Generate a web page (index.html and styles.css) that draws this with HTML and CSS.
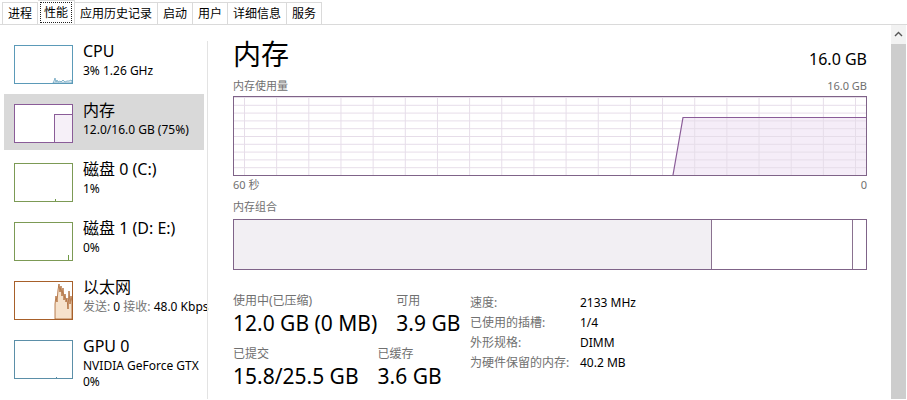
FILE: index.html
```html
<!DOCTYPE html>
<html lang="zh-CN">
<head>
  <meta charset="UTF-8">
  <title>任务管理器 - 性能</title>
  <link rel="stylesheet" href="styles.css">
</head>
<body>

  <div class="tabs">
    <div class="tab first">进程</div>
    <div class="tab active"><span class="focus">性能</span></div>
    <div class="tab">应用历史记录</div>
    <div class="tab">启动</div>
    <div class="tab">用户</div>
    <div class="tab">详细信息</div>
    <div class="tab">服务</div>
  </div>

  <div class="window">
    <!-- resource list -->
    <div class="sidebar">
      <div class="item">
        <svg class="thumb cpu" viewBox="0 0 57 37">
          <polygon points="38,37 39,35 40,32 41,36 42,34 43,36 45,35 46,36 48,34 50,36 52,35 54,35 56,34 57,35 57,37" fill="#e3eff4" stroke="#5b9ab8" stroke-width="0.7"/>
        </svg>
        <div class="info">
          <div class="name">CPU</div>
          <div class="detail">3% 1.26 GHz</div>
        </div>
      </div>
      <div class="item selected">
        <svg class="thumb mem" viewBox="0 0 57 37">
          <rect x="39.5" y="9.5" width="18" height="28" fill="#f6f0f8" stroke="#8a5c98"/>
        </svg>
        <div class="info">
          <div class="name">内存</div>
          <div class="detail">12.0/16.0 GB (75%)</div>
        </div>
      </div>
      <div class="item">
        <svg class="thumb disk" viewBox="0 0 57 37">
          <line x1="40.5" y1="35" x2="40.5" y2="37" stroke="#6f9a45"/>
        </svg>
        <div class="info">
          <div class="name">磁盘 0 (C:)</div>
          <div class="detail">1%</div>
        </div>
      </div>
      <div class="item">
        <svg class="thumb disk" viewBox="0 0 57 37">
          <line x1="53.5" y1="32" x2="53.5" y2="37" stroke="#6f9a45"/>
        </svg>
        <div class="info">
          <div class="name">磁盘 1 (D: E:)</div>
          <div class="detail">0%</div>
        </div>
      </div>
      <div class="item">
        <svg class="thumb eth" viewBox="0 0 57 37">
          <polygon points="40,37 40,22 41,14 42,20 43,8 44,2 45,10 46,4 47,14 48,6 49,18 50,12 51,20 52,16 53,27 54,9 55,22 56,14 57,20 57,37" fill="#f6e2cc" stroke="#a7602a" stroke-width="0.8"/>
        </svg>
        <div class="info">
          <div class="name">以太网</div>
          <div class="detail"><span class="muted">发送:</span> 0 <span class="muted">接收:</span> 48.0 Kbps</div>
        </div>
      </div>
      <div class="item">
        <svg class="thumb gpu" viewBox="0 0 57 37">
          <line x1="41.5" y1="36" x2="41.5" y2="37" stroke="#5b8fa8"/>
        </svg>
        <div class="info">
          <div class="name">GPU 0</div>
          <div class="detail">NVIDIA GeForce GTX</div>
          <div class="detail">0%</div>
        </div>
      </div>
    </div>

    <div class="divider"></div>

    <!-- memory details -->
    <div class="content">
      <div class="head">
        <div class="title">内存</div>
        <div class="total">16.0 GB</div>
      </div>

      <div class="chart-label">
        <span>内存使用量</span>
        <span>16.0 GB</span>
      </div>
      <div class="graph">
        <svg width="632" height="78" viewBox="0 0 632 78">
          <defs>
            <pattern id="grid" patternUnits="userSpaceOnUse" x="10" y="0" width="32.16" height="7.8">
              <line x1="0.5" y1="0" x2="0.5" y2="7.8" stroke="#e6dde9"/>
              <line x1="0" y1="0.5" x2="32.16" y2="0.5" stroke="#e6dde9"/>
            </pattern>
          </defs>
          <polygon points="439,78 449,20 632,20 632,78" fill="#f5edf8"/>
          <rect x="0" y="0" width="632" height="78" fill="url(#grid)"/>
          <polyline points="439,78 449,20.5 632,20.5" fill="none" stroke="#8a5c98" stroke-width="1.2"/>
        </svg>
      </div>
      <div class="chart-label axis">
        <span>60 秒</span>
        <span>0</span>
      </div>

      <div class="chart-label section">
        <span>内存组合</span>
      </div>
      <div class="composition">
        <div class="seg in-use"></div>
        <div class="seg standby"></div>
        <div class="seg free"></div>
      </div>

      <div class="stats">
        <div class="stats-left">
          <div class="stat-row">
            <div class="stat">
              <div class="label">使用中(已压缩)</div>
              <div class="value">12.0 GB (0 MB)</div>
            </div>
            <div class="stat">
              <div class="label">可用</div>
              <div class="value">3.9 GB</div>
            </div>
          </div>
          <div class="stat-row second">
            <div class="stat">
              <div class="label">已提交</div>
              <div class="value">15.8/25.5 GB</div>
            </div>
            <div class="stat">
              <div class="label">已缓存</div>
              <div class="value">3.6 GB</div>
            </div>
          </div>
        </div>
        <div class="stats-right">
          <span class="key">速度:</span><span>2133 MHz</span>
          <span class="key">已使用的插槽:</span><span>1/4</span>
          <span class="key">外形规格:</span><span>DIMM</span>
          <span class="key">为硬件保留的内存:</span><span>40.2 MB</span>
        </div>
      </div>
    </div>

    <div class="scrollbar">
      <div class="scroll-up">
        <svg width="15" height="19" viewBox="0 0 15 19">
          <polyline points="4,11 7.5,7.5 11,11" fill="none" stroke="#555" stroke-width="1.4"/>
        </svg>
      </div>
      <div class="scroll-thumb"></div>
    </div>
  </div>

</body>
</html>
```

FILE: styles.css
```css
body {
  margin: 0;
  width: 907px;
  height: 400px;
  overflow: hidden;
  background: #fff;
  color: #000;
  font-family: "Noto Sans", "Noto Sans CJK SC", sans-serif;
}
.tabs {
  display: flex;
  align-items: flex-end;
  height: 25px;
  padding-left: 2px;
  box-sizing: border-box;
  border-bottom: 1px solid #dadada;
}
.tab {
  height: 22px;
  box-sizing: border-box;
  padding: 0 5px;
  font-size: 12px;
  line-height: 21px;
  border: 1px solid #dadada;
  border-left: none;
  border-bottom: none;
}
.tab.first {
  border-left: 1px solid #dadada;
}
.tab.active {
  height: 24px;
  padding: 0 3px;
  line-height: 23px;
}
.focus {
  padding: 1px 3px;
  outline: 1px dotted #222;
}
.window {
  display: flex;
  height: 374px;
}
.sidebar {
  width: 207px;
  flex-shrink: 0;
  padding-top: 10px;
  box-sizing: border-box;
}
.item {
  display: flex;
  gap: 10px;
  width: 200px;
  height: 56px;
  margin: 0 0 3px 4px;
  padding-left: 10px;
  box-sizing: border-box;
}
.item.selected {
  background: #d9d9d9;
}
.thumb {
  flex-shrink: 0;
  width: 57px;
  height: 37px;
  margin-top: 10px;
  background: #fff;
  border: 1px solid;
}
.thumb.cpu { border-color: #5b9ab8; }
.thumb.mem { border-color: #8a5c98; }
.thumb.disk { border-color: #7c9a55; }
.thumb.eth { border-color: #a7602a; }
.thumb.gpu { border-color: #5b8fa8; }
.info {
  padding-top: 4px;
  white-space: nowrap;
}
.name {
  font-size: 16px;
  line-height: 24px;
}
.detail {
  font-size: 12px;
  line-height: 16px;
}
.muted {
  color: #767676;
}
.divider {
  width: 1px;
  flex-shrink: 0;
  margin-top: 16px;
  background: #e3e3e3;
}
.content {
  flex: 1;
  padding: 11px 24px 0 25px;
}
.head {
  display: flex;
  justify-content: space-between;
  align-items: baseline;
  margin-bottom: 7px;
}
.title {
  font-size: 28px;
  line-height: 36px;
}
.total {
  font-size: 16px;
}
.chart-label {
  display: flex;
  justify-content: space-between;
  font-size: 11px;
  line-height: 14px;
  color: #707070;
}
.graph {
  margin-top: 3px;
  height: 78px;
  border: 1px solid #7f6388;
}
.graph svg {
  display: block;
}
.axis {
  margin-top: 2px;
}
.section {
  margin-top: 8px;
}
.composition {
  display: flex;
  height: 49px;
  margin-top: 5px;
  border: 1px solid #7f6388;
}
.seg {
  height: 100%;
}
.in-use {
  width: 477px;
  background: #f2eff3;
  border-right: 1px solid #8a7290;
}
.standby {
  width: 140px;
  border-right: 1px solid #8a7290;
}
.free {
  flex: 1;
}
.stats {
  display: flex;
  margin-top: 23px;
}
.stats-left {
  width: 237px;
  flex-shrink: 0;
}
.stat-row {
  display: flex;
  gap: 19px;
}
.stat-row.second {
  margin-top: 10px;
}
.stat .label {
  font-size: 12px;
  line-height: 16px;
  color: #707070;
}
.stat .value {
  margin-top: 1px;
  font-size: 21px;
  line-height: 26px;
  white-space: nowrap;
}
.stats-right {
  display: grid;
  grid-template-columns: 110px auto;
  align-content: start;
  font-size: 12px;
  line-height: 20px;
}
.stats-right .key {
  color: #707070;
}
.scrollbar {
  display: flex;
  flex-direction: column;
  width: 15px;
  flex-shrink: 0;
  margin-right: 1px;
}
.scroll-up {
  height: 19px;
  background: #f2f2f2;
}
.scroll-up svg {
  display: block;
}
.scroll-thumb {
  flex: 1;
  background: #cdcdcd;
}
```
